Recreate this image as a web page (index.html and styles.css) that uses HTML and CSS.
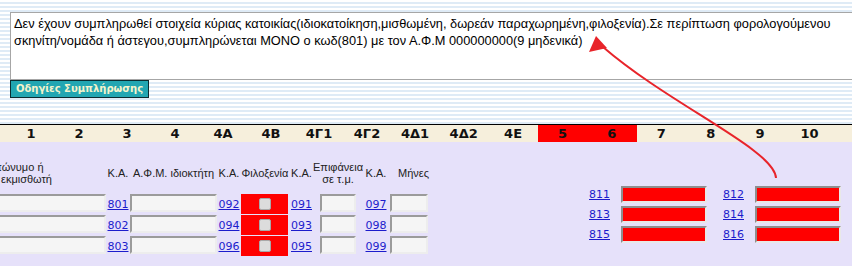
FILE: index.html
```html
<!DOCTYPE html>
<html lang="el">
<head>
<meta charset="utf-8">
<title>Κύρια κατοικία</title>
<link rel="stylesheet" href="styles.css">
</head>
<body>
<div class="page">
  <section class="top">
    <div class="notes">Δεν έχουν συμπληρωθεί στοιχεία κύριας κατοικίας(ιδιοκατοίκηση,μισθωμένη, δωρεάν παραχωρημένη,φιλοξενία).Σε περίπτωση φορολογούμενου σκηνίτη/νομάδα ή άστεγου,συμπληρώνεται ΜΟΝΟ ο κωδ(801) με τον Α.Φ.Μ 000000000(9 μηδενικά)</div>
    <button class="guide" type="button">Οδηγίες Συμπλήρωσης</button>
  </section>

  <div class="colheads">
    <span>1</span><span>2</span><span>3</span><span>4</span><span>4A</span><span>4B</span><span>4Γ1</span><span>4Γ2</span><span>4Δ1</span>
    <span>4Δ2</span><span>4E</span><span class="hot">5</span><span class="hot">6</span><span>7</span><span>8</span><span>9</span><span>10</span>
  </div>

  <section class="form">
    <div class="left-grid">
      <div class="lbl lbl-name">Επώνυμο ή εκμισθωτή</div>
      <div class="lbl">Κ.Α.</div>
      <div class="lbl">Α.Φ.Μ. ιδιοκτήτη</div>
      <div class="lbl">Κ.Α.</div>
      <div class="lbl">Φιλοξενία</div>
      <div class="lbl">Κ.Α.</div>
      <div class="lbl">Επιφάνεια<br>σε τ.μ.</div>
      <div class="lbl">Κ.Α.</div>
      <div class="lbl lbl-left">Μήνες</div>

      <input class="fld" type="text"><a href="#" class="code">801</a><input class="fld" type="text"><a href="#" class="code">092</a><span class="redbox"><span class="chk"></span></span><a href="#" class="code">091</a><input class="fld fld-sm" type="text"><a href="#" class="code">097</a><input class="fld" type="text">
      <input class="fld" type="text"><a href="#" class="code">802</a><input class="fld" type="text"><a href="#" class="code">094</a><span class="redbox"><span class="chk"></span></span><a href="#" class="code">093</a><input class="fld fld-sm" type="text"><a href="#" class="code">098</a><input class="fld" type="text">
      <input class="fld" type="text"><a href="#" class="code">803</a><input class="fld" type="text"><a href="#" class="code">096</a><span class="redbox"><span class="chk"></span></span><a href="#" class="code">095</a><input class="fld fld-sm" type="text"><a href="#" class="code">099</a><input class="fld" type="text">
    </div>

    <div class="right-grid">
      <a href="#" class="code">811</a><input class="fld red" type="text"><span></span><a href="#" class="code">812</a><input class="fld red" type="text">
      <a href="#" class="code">813</a><input class="fld red" type="text"><span></span><a href="#" class="code">814</a><input class="fld red" type="text">
      <a href="#" class="code">815</a><input class="fld red" type="text"><span></span><a href="#" class="code">816</a><input class="fld red" type="text">
    </div>
  </section>
</div>

<svg class="arrow" width="852" height="266" viewBox="0 0 852 266" aria-hidden="true">
  <path d="M603 47 C 670 105, 775 150, 776 178" fill="none" stroke="#e8242a" stroke-width="2"/>
  <polygon points="589,52 596,36 607,48" fill="#e8242a"/>
</svg>
</body>
</html>
```

FILE: styles.css
```css
html, body {
  margin: 0;
  padding: 0;
}
body {
  width: 852px;
  height: 266px;
  overflow: hidden;
  position: relative;
  font-family: "DejaVu Sans", Verdana, sans-serif;
  background: #e6e1fa;
}
.page {
  display: flex;
  flex-direction: column;
  width: 852px;
}
.top {
  height: 124px;
  box-sizing: border-box;
  padding: 12px 0 0 10px;
  background: repeating-linear-gradient(to bottom, #ffffff 0, #ffffff 2px, #dfebf6 2px, #dfebf6 4px);
  display: flex;
  flex-direction: column;
  align-items: flex-start;
}
.notes {
  width: 870px;
  height: 68px;
  box-sizing: border-box;
  border: 1px solid #a6a6a6;
  background: #fff;
  padding: 2px 20px 0 3px;
  font-family: "Liberation Sans", Arial, sans-serif;
  font-size: 12.8px;
  line-height: 17px;
  color: #000;
  overflow: hidden;
}
.guide {
  height: 18px;
  width: 139px;
  margin: 0;
  padding: 0;
  border: 1px solid #0b2c31;
  background: #22a6b2;
  color: #f6f4cc;
  font-family: "DejaVu Sans", Verdana, sans-serif;
  font-weight: bold;
  font-size: 10px;
  line-height: 16px;
  text-align: center;
}
.colheads {
  display: grid;
  grid-template-columns: repeat(9, 48px) repeat(8, 49.4px);
  padding-left: 7px;
  height: 17px;
  border-top: 1px solid #000;
  background: #f6efdc;
  font-family: "DejaVu Sans", Verdana, sans-serif;
  font-weight: bold;
  font-size: 13px;
  line-height: 17px;
  color: #111;
}
.colheads span {
  text-align: center;
}
.colheads .hot {
  background: #ff0000;
}
.form {
  display: flex;
  justify-content: space-between;
  align-items: flex-start;
  padding-right: 11px;
  min-height: 124px;
}
.left-grid {
  display: grid;
  grid-template-columns: 112px 24px 87px 24px 48px 25px 48px 28px 38px;
  grid-template-rows: 33px 20px 20px 20px;
  row-gap: 1px;
  margin-left: -6px;
  padding-top: 18px;
  align-items: center;
}
.lbl {
  font-family: "Liberation Sans", Arial, sans-serif;
  font-size: 11px;
  line-height: 12px;
  color: #222;
  text-align: center;
  white-space: nowrap;
  justify-self: center;
  margin-bottom: 7px;
  align-self: center;
}
.lbl-name {
  justify-self: start;
  text-align: left;
  white-space: normal;
  width: 60px;
  padding-left: 7px;
  text-indent: -14px;
}
.lbl-left {
  justify-self: start;
  padding-left: 8px;
}
.code {
  font-size: 11px;
  line-height: 13px;
  color: #1c1ccc;
  text-decoration: underline;
  justify-self: center;
}
.fld {
  box-sizing: border-box;
  height: 18px;
  width: 100%;
  margin: 0;
  padding: 0;
  background: #f5f5f5;
  border-style: solid;
  border-width: 2px;
  border-color: #9b9b9b #ededed #ededed #9b9b9b;
  align-self: start;
}
.fld-sm {
  width: 36px;
  justify-self: center;
}
.redbox {
  height: 20px;
  background: #ff0000;
  display: flex;
  align-items: center;
  justify-content: center;
  margin-right: 1px;
}
.chk {
  width: 12px;
  height: 12px;
  box-sizing: border-box;
  background: #dcdcdc;
  border: 1px solid #a9a9a9;
  border-radius: 2px;
}
.right-grid {
  display: grid;
  grid-template-columns: 32px 86px 16px 32px 86px;
  grid-auto-rows: 17px;
  row-gap: 3px;
  margin-top: 44px;
  align-items: center;
}
.right-grid .code {
  justify-self: start;
}
.fld.red {
  height: 17px;
  background: #ff0000;
  border-color: #8e8e8e #e8e8e8 #e8e8e8 #8e8e8e;
}
.arrow {
  position: absolute;
  left: 0;
  top: 0;
  pointer-events: none;
}
```
